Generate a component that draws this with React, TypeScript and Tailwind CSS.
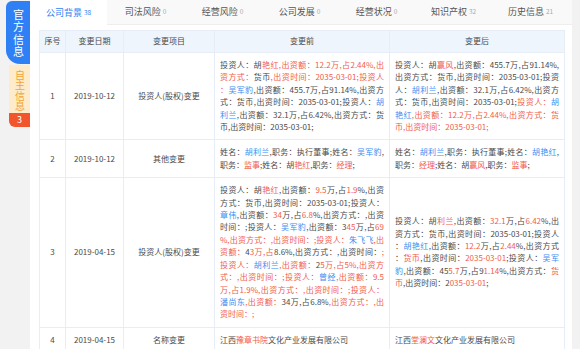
import React from "react";

const RED = "text-[#f25c4a]";
const BLUE = "text-[#3b8cf0]";

function Line({ s, justify }: { s: string; justify: boolean }) {
  const parts: React.ReactNode[] = [];
  const re = /\{(r|b)\|([^}]*)\}/g;
  let last = 0;
  let m: RegExpExecArray | null;
  let i = 0;
  while ((m = re.exec(s))) {
    if (m.index > last) parts.push(<span key={i++}>{s.slice(last, m.index)}</span>);
    parts.push(
      <span key={i++} className={m[1] === "r" ? RED : BLUE}>
        {m[2]}
      </span>
    );
    last = re.lastIndex;
  }
  if (last < s.length) parts.push(<span key={i++}>{s.slice(last)}</span>);
  return (
    <div className={justify ? "whitespace-nowrap text-justify [text-align-last:justify]" : "whitespace-nowrap"}>
      {parts}
    </div>
  );
}

function Block({ lines }: { lines: string[] }) {
  return (
    <div>
      {lines.map((l, idx) => (
        <Line key={idx} s={l} justify={idx < lines.length - 1} />
      ))}
    </div>
  );
}

type Row = { no: string; date: string; item: string; before: string[]; after: string[] };

const rows: Row[] = [
  {
    no: "1",
    date: "2019-10-12",
    item: "投资人(股权)变更",
    before: [
      "投资人：胡{r|艳红,出资额：12.2万,占2.44%,出}",
      "{r|资方式：}货币{r|,出资时间：2035-03-01;投资人}",
      "{r|：}{b|吴军豹},出资额：455.7万,占91.14%,出资方",
      "式：货币,出资时间：2035-03-01;投资人：{b|胡}",
      "{b|利兰},出资额：32.1万,占6.42%,出资方式：货",
      "币,出资时间：2035-03-01;",
    ],
    after: [
      "投资人：胡{r|赢风},出资额：455.7万,占91.14%,",
      "出资方式：货币,出资时间：2035-03-01;投资",
      "人：{b|胡利兰},出资额：32.1万,占6.42%,出资方",
      "式：货币,出资时间：2035-03-01;{r|投资人：}{b|胡}",
      "{b|艳红}{r|,出资额：12.2万,占2.44%,出资方式：货}",
      "{r|币,出资时间：2035-03-01;}",
    ],
  },
  {
    no: "2",
    date: "2019-10-12",
    item: "其他变更",
    before: [
      "姓名：{b|胡利兰},职务：执行董事;姓名：{b|吴军豹},",
      "职务：{r|监事};姓名：胡{r|艳红},职务：{r|经理};",
    ],
    after: [
      "姓名：{b|胡利兰},职务：执行董事;姓名：{b|胡艳红},",
      "职务：{r|经理};姓名：胡{r|赢风},职务：{r|监事};",
    ],
  },
  {
    no: "3",
    date: "2019-04-15",
    item: "投资人(股权)变更",
    before: [
      "投资人：胡{r|艳红},出资额：{r|9.5}万,占{r|1.9}%,出资",
      "方式：货币,出资时间：2035-03-01;投资人：",
      "{b|章伟},出资额：{r|34}万,占{r|6.8}%,出资方式：,出资",
      "时间：;投资人：{b|吴军豹},出资额：3{r|45}万,占{r|69}",
      "{r|%,出资方式：,出资时间：;投资人：}{b|朱飞飞}{r|,出}",
      "{r|资额：}4{r|3万,占}8.6%,出资方式：,出资时间：{r|;}",
      "{r|投资人：}{b|胡利兰}{r|,出资额：}2{r|5万,占5%,出资方}",
      "{r|式：,出资时间：;投资人：}{b|曾经}{r|,出资额：9.5}",
      "{r|万,占1.9%,出资方式：,出资时间：;投资人：}",
      "{b|潘尚东}{r|,出资额：}34万,占6.8%{r|,出资方式：,出}",
      "{r|资时间：;}",
    ],
    after: [
      "投资人：胡{r|利兰},出资额：{r|32.1}万,占{r|6.42}%,出",
      "资方式：货币,出资时间：2035-03-01;投资人",
      "：{b|胡艳红},出资额：{r|12.2}万,占{r|2.44}%,出资方式",
      "：{r|货币},出资时间：{r|2035-03-01};投资人：{b|吴军}",
      "{b|豹},出资额：45{r|5.7}万,占9{r|1.14}%,出资方式：{r|货}",
      "{r|币},出资时间：2{r|035-03-01};",
    ],
  },
  {
    no: "4",
    date: "2019-04-15",
    item: "名称变更",
    before: ["江西{r|豫章书院}文化产业发展有限公司"],
    after: ["江西{r|堂澜文}文化产业发展有限公司"],
  },
];

const tabs: [string, string][] = [
  ["公司背景", "38"],
  ["司法风险", "0"],
  ["经营风险", "0"],
  ["公司发展", "0"],
  ["经营状况", "0"],
  ["知识产权", "32"],
  ["历史信息", "21"],
];

export default function App() {
  const cell = "border border-[#e6edf6] px-[5px] py-[6px] align-middle";
  return (
    <div className="flex w-[580px] h-[349px] overflow-hidden bg-[#f2f2f2] font-['Noto_Sans_CJK_SC',sans-serif] text-[#4a4a4a]">
      <aside className="w-[30px] shrink-0 flex flex-col items-end pt-[1px]">
        <div className="w-[24px] h-[63px] bg-[#2f7ff5] rounded-tl-[6px] rounded-bl-[14px] flex justify-center pt-[8px] text-white">
          <span className="[writing-mode:vertical-rl] text-[11px] leading-[11px] tracking-[1.5px]">官方信息</span>
        </div>
        <div className="mt-[1px] w-[21px] flex flex-col rounded-bl-[6px] overflow-hidden">
          <div className="h-[48px] bg-[#fdebc9] flex justify-center pt-[5px] text-[#f2a33a]">
            <span className="[writing-mode:vertical-rl] text-[10px] leading-[10px] tracking-[0.4px]">自主信息</span>
          </div>
          <div className="h-[14px] bg-[#f2552c] text-white text-[9px] leading-[14px] text-center">3</div>
        </div>
      </aside>
      <main className="w-[542px] shrink-0 bg-white flex flex-col">
        <div className="flex h-[25px] bg-[#f9f9f9] border-b border-[#eeeeee]">
          {tabs.map(([t, n], i) => (
            <div
              key={t}
              className={
                "w-[77px] shrink-0 flex items-center justify-center gap-[2px] " +
                (i === 0 ? "bg-white text-[#2f7ff5] h-[25px]" : "text-[#555555]")
              }
            >
              <span className="text-[9px]">{t}</span>
              <span className={"text-[6.5px] " + (i === 0 ? "text-[#2f7ff5]" : "text-[#aaaaaa]")}>{n}</span>
            </div>
          ))}
        </div>
        <div className="pl-[9px] pt-[5px]">
          <table className="w-[525px] table-fixed border-collapse text-[8px] leading-[12.4px]">
            <colgroup>
              <col className="w-[26px]" />
              <col className="w-[58px]" />
              <col className="w-[91px]" />
              <col className="w-[175px]" />
              <col className="w-[175px]" />
            </colgroup>
            <thead>
              <tr className="bg-[#eef5fd] h-[22px]">
                <th className="border border-[#e6edf6] font-normal text-center">序号</th>
                <th className="border border-[#e6edf6] font-normal text-center">变更日期</th>
                <th className="border border-[#e6edf6] font-normal text-center">变更项目</th>
                <th className="border border-[#e6edf6] font-normal text-center">变更前</th>
                <th className="border border-[#e6edf6] font-normal text-center">变更后</th>
              </tr>
            </thead>
            <tbody>
              {rows.map((r) => (
                <tr key={r.no}>
                  <td className={cell + " text-center"}>{r.no}</td>
                  <td className={cell + " text-center"}>{r.date}</td>
                  <td className={cell + " text-center"}>{r.item}</td>
                  <td className={cell}>
                    <Block lines={r.before} />
                  </td>
                  <td className={cell}>
                    <Block lines={r.after} />
                  </td>
                </tr>
              ))}
            </tbody>
          </table>
        </div>
      </main>
    </div>
  );
}
